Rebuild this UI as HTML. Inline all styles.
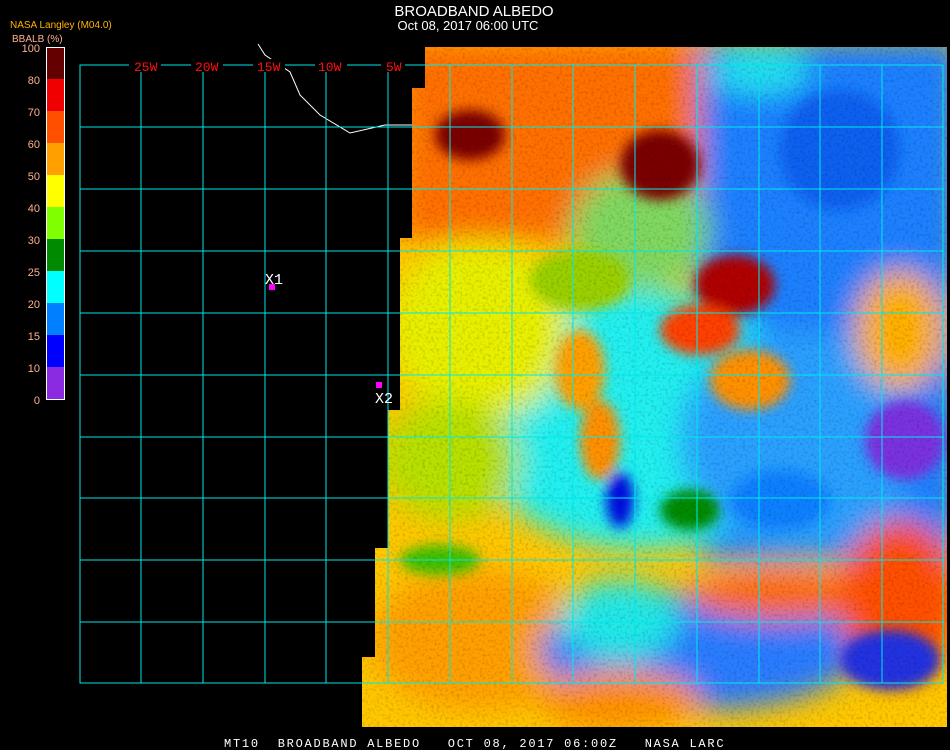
<!DOCTYPE html>
<html><head><meta charset="utf-8"><style>
html,body{margin:0;padding:0;background:#000;width:950px;height:750px;overflow:hidden}
svg{position:absolute;left:0;top:0}
</style></head><body>
<svg width="950" height="750" viewBox="0 0 950 750" xmlns="http://www.w3.org/2000/svg">
<defs>
<clipPath id="dc"><polygon points="425,47 947,47 947,727 362,727 362,657 375,657 375,548 388,548 388,410 400,410 400,238 412,238 412,88 425,88"/></clipPath>
<filter id="b1" x="-50%" y="-50%" width="200%" height="200%"><feGaussianBlur stdDeviation="14"/></filter>
<filter id="b2" x="-50%" y="-50%" width="200%" height="200%"><feGaussianBlur stdDeviation="6"/></filter>
<filter id="nz"><feTurbulence type="fractalNoise" baseFrequency="0.35" numOctaves="2" seed="3"/><feColorMatrix type="matrix" values="0 0 0 0 0  0 0 0 0 0  0 0 0 0 0  0 0 0 1.6 -0.75"/></filter>
</defs>
<g clip-path="url(#dc)">
<rect x="350" y="40" width="600" height="700" fill="#ffc800"/>
<g filter="url(#b1)">
<rect x="400" y="40" width="320" height="200" fill="#ff7000"/>
<rect x="700" y="40" width="260" height="520" fill="#1f80ff"/>
<ellipse cx="760" cy="70" rx="50" ry="25" fill="#20e0f0"/>
<ellipse cx="640" cy="420" rx="170" ry="130" fill="#20f0f0"/>
<ellipse cx="800" cy="440" rx="120" ry="110" fill="#2aa0ff"/>
<ellipse cx="480" cy="330" rx="90" ry="90" fill="#e8f000"/>
<ellipse cx="450" cy="460" rx="70" ry="60" fill="#b8e000"/>
<ellipse cx="640" cy="230" rx="70" ry="60" fill="#80d860"/>
<ellipse cx="480" cy="640" rx="110" ry="70" fill="#ffa000"/>
<ellipse cx="700" cy="650" rx="160" ry="60" fill="#2a7cff"/>
<ellipse cx="620" cy="620" rx="60" ry="40" fill="#20e8e8"/>
<ellipse cx="780" cy="595" rx="90" ry="25" fill="#ff6a00"/>
<ellipse cx="900" cy="600" rx="60" ry="80" fill="#ff5000"/>
<ellipse cx="900" cy="330" rx="45" ry="60" fill="#ffb000"/>
<ellipse cx="620" cy="700" rx="80" ry="30" fill="#ff9000"/>
</g>
<g filter="url(#b2)">
<ellipse cx="470" cy="135" rx="35" ry="25" fill="#7a0000"/>
<ellipse cx="660" cy="165" rx="40" ry="35" fill="#7a0000"/>
<ellipse cx="735" cy="285" rx="40" ry="30" fill="#b00000"/>
<ellipse cx="700" cy="330" rx="40" ry="25" fill="#ff4000"/>
<ellipse cx="580" cy="370" rx="25" ry="40" fill="#ffa000"/>
<ellipse cx="600" cy="440" rx="20" ry="40" fill="#ff9000"/>
<ellipse cx="620" cy="500" rx="14" ry="28" fill="#0010e0"/>
<ellipse cx="905" cy="440" rx="40" ry="40" fill="#7a30e0"/>
<ellipse cx="780" cy="500" rx="50" ry="30" fill="#1080ff"/>
<ellipse cx="690" cy="510" rx="30" ry="20" fill="#008a00"/>
<ellipse cx="440" cy="560" rx="40" ry="15" fill="#40c000"/>
<ellipse cx="840" cy="150" rx="60" ry="60" fill="#0a60f0"/>
<ellipse cx="580" cy="280" rx="50" ry="30" fill="#9ad000"/>
<ellipse cx="750" cy="380" rx="40" ry="30" fill="#ff9000"/>
<ellipse cx="890" cy="660" rx="50" ry="30" fill="#2030e0"/>
</g>
<rect x="350" y="40" width="600" height="700" filter="url(#nz)" opacity="0.25"/>
</g>
<polyline points="258,44 265,55 290,72 300,95 320,115 350,133 385,125 412,125" fill="none" stroke="#fff" stroke-width="1"/>
<g stroke="#00e8e8" stroke-width="1.2" fill="none" shape-rendering="crispEdges">
<rect x="80" y="65" width="863" height="618"/>
<path d="M141 65V683M203 65V683M265 65V683M326 65V683M388 65V683M450 65V683M512 65V683M573 65V683M635 65V683M697 65V683M759 65V683M820 65V683M882 65V683"/>
<path d="M80 127H944M80 189H944M80 251H944M80 313H944M80 375H944M80 437H944M80 498H944M80 560H944M80 622H944"/>
</g>
<g font-family="Liberation Mono, monospace" font-size="13" fill="#ff1010">
<rect x="129" y="59" width="32" height="13" fill="#000"/><text x="134" y="71">25W</text>
<rect x="191" y="59" width="32" height="13" fill="#000"/><text x="195" y="71">20W</text>
<rect x="253" y="59" width="32" height="13" fill="#000"/><text x="257" y="71">15W</text>
<rect x="315" y="59" width="32" height="13" fill="#000"/><text x="318" y="71">10W</text>
<rect x="381" y="59" width="24" height="13" fill="#000"/><text x="386" y="71">5W</text>
</g>
<g font-family="Liberation Sans, sans-serif" fill="#fff" text-anchor="middle">
<text x="474" y="16" font-size="15">BROADBAND ALBEDO</text>
<text x="468" y="30" font-size="13">Oct 08, 2017 06:00 UTC</text>
</g>
<text x="10" y="28" font-family="Liberation Sans, sans-serif" font-size="10" fill="#ffb400">NASA Langley (M04.0)</text>
<text x="12" y="42" font-family="Liberation Sans, sans-serif" font-size="10" fill="#ffb090">BBALB (%)</text>
<g>
<rect x="46" y="47" width="19" height="32" fill="#640000"/>
<rect x="46" y="79" width="19" height="32" fill="#f00000"/>
<rect x="46" y="111" width="19" height="32" fill="#ff5000"/>
<rect x="46" y="143" width="19" height="32" fill="#ffa000"/>
<rect x="46" y="175" width="19" height="32" fill="#ffff00"/>
<rect x="46" y="207" width="19" height="32" fill="#80ff00"/>
<rect x="46" y="239" width="19" height="32" fill="#008a00"/>
<rect x="46" y="271" width="19" height="32" fill="#00ffff"/>
<rect x="46" y="303" width="19" height="32" fill="#0080ff"/>
<rect x="46" y="335" width="19" height="32" fill="#0000ff"/>
<rect x="46" y="367" width="19" height="32" fill="#8a2be2"/>
<rect x="46.5" y="47.5" width="18" height="352" fill="none" stroke="#fff" stroke-width="1"/>
</g>
<g font-family="Liberation Sans, sans-serif" font-size="11" fill="#ffb090" text-anchor="end">
<text x="40" y="52">100</text><text x="40" y="84">80</text><text x="40" y="116">70</text><text x="40" y="148">60</text><text x="40" y="180">50</text><text x="40" y="212">40</text><text x="40" y="244">30</text><text x="40" y="276">25</text><text x="40" y="308">20</text><text x="40" y="340">15</text><text x="40" y="372">10</text><text x="40" y="404">0</text>
</g>
<rect x="269" y="284" width="6" height="6" fill="#ff00ff"/>
<text x="265" y="284" font-family="Liberation Mono, monospace" font-size="15" fill="#fff">X1</text>
<rect x="376" y="382" width="6" height="6" fill="#ff00ff"/>
<text x="375" y="403" font-family="Liberation Mono, monospace" font-size="15" fill="#fff">X2</text>
<text x="224" y="747" font-family="Liberation Mono, monospace" font-size="12" fill="#fff" letter-spacing="1.75" xml:space="preserve">MT10  BROADBAND ALBEDO   OCT 08, 2017 06:00Z   NASA LARC</text>
</svg>
</body></html>
